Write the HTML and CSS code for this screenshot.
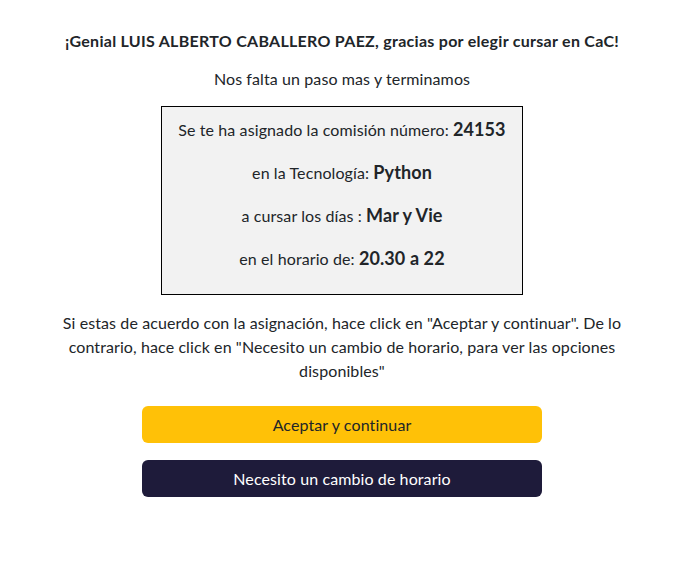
FILE: index.html
```html
<!DOCTYPE html>
<html lang="es">
<head>
<meta charset="utf-8">
<title>Asignación de comisión</title>
<link rel="stylesheet" href="styles.css">
</head>
<body>
<main class="page">
  <h1 class="title">¡Genial LUIS ALBERTO CABALLERO PAEZ, gracias por elegir cursar en CaC!</h1>
  <p class="subtitle">Nos falta un paso mas y terminamos</p>
  <section class="card">
    <p class="row">Se te ha asignado la comisión número: <strong>24153</strong></p>
    <p class="row">en la Tecnología: <strong>Python</strong></p>
    <p class="row">a cursar los días : <strong>Mar y Vie</strong></p>
    <p class="row">en el horario de: <strong>20.30 a 22</strong></p>
  </section>
  <p class="info">Si estas de acuerdo con la asignación, hace click en "Aceptar y continuar". De lo contrario, hace click en "Necesito un cambio de horario, para ver las opciones disponibles"</p>
  <div class="actions">
    <button class="btn btn-accept">Aceptar y continuar</button>
    <button class="btn btn-change">Necesito un cambio de horario</button>
  </div>
</main>
</body>
</html>
```
FILE: styles.css
```css
* { box-sizing: border-box; }
html, body { margin: 0; padding: 0; background: #fff; }
body {
  font-family: Lato, "Open Sans", sans-serif;
  color: #212529;
  font-size: 16px;
  line-height: 24px;
  letter-spacing: 0.1px;
}
.page {
  display: flex;
  flex-direction: column;
  align-items: center;
  padding: 29px 4px 0 0;
}
.title {
  margin: 0;
  font-size: 16px;
  font-weight: 700;
  line-height: 24px;
  letter-spacing: 0.28px;
  text-align: center;
}
.subtitle {
  margin: 14px 0 15px;
  text-align: center;
}
.card {
  width: 362px;
  border: 1px solid #000;
  background: #f2f2f2;
  padding: 9px 0 6px;
  text-align: center;
}
.row {
  margin: 0 0 16px;
  line-height: 26px;
}
.row strong {
  font-size: 18px;
  font-weight: 700;
}
.info {
  width: 584px;
  margin: 16px 0 23px;
  text-align: center;
}
.actions {
  display: flex;
  flex-direction: column;
  gap: 17px;
}
.btn {
  width: 400px;
  height: 37px;
  border: none;
  border-radius: 6px;
  font-family: inherit;
  font-size: 16px;
  letter-spacing: 0.1px;
  cursor: pointer;
}
.btn-accept { background: #ffc107; color: #212529; }
.btn-change { background: #1e1b3a; color: #fff; }
```
